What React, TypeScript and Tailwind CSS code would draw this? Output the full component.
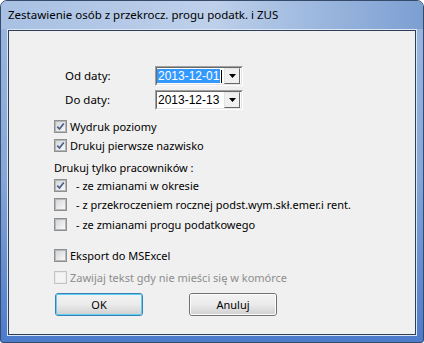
import React from 'react';

const ui = "font-['Noto_Sans',sans-serif] text-[11px] leading-none";

type BoxProps = { checked?: boolean; disabled?: boolean; label: string; gap?: string };

const CheckRow = ({ checked, disabled, label, gap = 'ml-[3px]' }: BoxProps) => {
  return (
    <div className="flex h-[20px] items-center">
      <div
        className={`flex h-[13px] w-[13px] items-center justify-center border ${
          disabled ? 'border-[#c4c4c4] bg-[#f4f4f4]' : 'border-[#8e8f8f] bg-[#f5f5f5]'
        }`}
      >
        <div
          className={`relative h-[11px] w-[11px] border ${
            disabled
              ? 'border-[#eaeaea] bg-[#f4f4f4]'
              : 'border-[#b4b7bb] bg-gradient-to-br from-[#d5d6d8] to-[#f9f9f9]'
          }`}
        >
          {checked && (
            <svg viewBox="0 0 9 9" className="absolute left-0 top-0 h-[9px] w-[9px]">
              <path d="M1.3 4.6 L3.5 7 L7.8 1.4" fill="none" stroke="#4b5d8f" strokeWidth="1.7" />
            </svg>
          )}
        </div>
      </div>
      <span className={`${gap} whitespace-nowrap ${disabled ? 'text-[#8d8d8d]' : 'text-black'}`}>{label}</span>
    </div>
  );
};

const DateField = ({ value, selected }: { value: string; selected?: boolean }) => {
  return (
    <div className="h-[20px] w-[88px] border border-t-[#a0a0a0] border-l-[#a0a0a0] border-b-white border-r-white">
      <div className="flex h-full w-full items-center border border-t-[#696969] border-l-[#696969] border-b-[#e3e3e3] border-r-[#e3e3e3] bg-white">
        <div className="flex min-w-0 flex-1 items-center overflow-hidden whitespace-nowrap font-['Liberation_Sans',sans-serif] text-[12px]">
          <span className={selected ? 'bg-[#3399ff] px-[1px] py-[1px] text-white' : 'px-[1px] text-black'}>{value}</span>
          {selected && <span className="ml-[1px] h-[13px] w-[1px] shrink-0 bg-black" />}
        </div>
        <div className="mr-[1px] flex h-[16px] w-[16px] shrink-0 items-center justify-center border border-t-[#e3e3e3] border-l-[#e3e3e3] border-b-[#696969] border-r-[#696969] bg-[#f0f0f0]">
          <svg viewBox="0 0 7 4" className="h-[4px] w-[7px]">
            <path d="M0 0 H7 L3.5 4 Z" fill="#000" />
          </svg>
        </div>
      </div>
    </div>
  );
};

const WinButton = ({ label, isDefault }: { label: string; isDefault?: boolean }) => {
  return (
    <div
      className={`flex h-[23px] w-[88px] rounded-[3px] border ${
        isDefault ? 'border-[#3c7fb1]' : 'border-[#707070]'
      }`}
    >
      <div
        className={`flex flex-1 items-center justify-center rounded-[2px] border bg-gradient-to-b from-[#f2f2f2] via-[#ebebeb] to-[#d2d2d2] ${
          isDefault ? 'border-[#5fd0f5]' : 'border-[#fcfcfc]'
        }`}
      >
        <span className="text-black">{label}</span>
      </div>
    </div>
  );
};

export default function App() {
  return (
    <div className={`${ui} h-[343px] w-[424px] bg-white`}>
      <div className="flex h-[343px] w-[424px] flex-col rounded-t-[7px] rounded-b-[3px] border border-[#364a69] bg-gradient-to-b from-[#9cb8e1] via-[#86a7d9] to-[#4c7bcb]">
        <div className="flex h-[28px] items-center bg-gradient-to-r from-[#a8c0e3] via-[#bed0ea] to-[#7c9fd2] pl-[7px] rounded-t-[6px] text-[11.5px]">
          <span className="text-black">Zestawienie osób z przekrocz. progu podatk. i ZUS</span>
        </div>
        <div className="mx-[6px] mb-[6px] flex-1 border border-[#dce6f4]">
          <div className="h-full border border-[#2d3e56] bg-[#f0f0f0]">
            <div className="flex flex-col pl-[45px] pt-[35px]">
              <div className="flex flex-col gap-[4px]">
                <div className="flex h-[20px] items-center">
                  <span className="ml-[11px] w-[90px] text-[11.5px]">Od daty:</span>
                  <DateField value="2013-12-01" selected />
                </div>
                <div className="flex h-[20px] items-center">
                  <span className="ml-[11px] w-[90px] text-[11.5px]">Do daty:</span>
                  <DateField value="2013-12-13" />
                </div>
              </div>
              <div className="mt-[6px]">
                <CheckRow checked label="Wydruk poziomy" />
              </div>
              <div className="-mt-[1px]">
                <CheckRow checked label="Drukuj pierwsze nazwisko" />
              </div>
              <div className="mt-[2px] flex h-[20px] items-center">
                <span>Drukuj tylko pracowników :</span>
              </div>
              <div className="-mt-[2px]">
                <CheckRow checked gap="ml-[9px]" label="- ze zmianami w okresie" />
              </div>
              <div className="-mt-[1px]">
                <CheckRow gap="ml-[9px]" label="- z przekroczeniem rocznej podst.wym.skł.emer.i rent." />
              </div>
              <CheckRow gap="ml-[9px]" label="- ze zmianami progu podatkowego" />
              <div className="mt-[11px]">
                <CheckRow label="Eksport do MSExcel" />
              </div>
              <div className="mt-[2px]">
                <CheckRow disabled label="Zawijaj tekst gdy nie mieści się w komórce" />
              </div>
              <div className="ml-[1px] mt-[6px] flex gap-[46px]">
                <WinButton isDefault label="OK" />
                <WinButton label="Anuluj" />
              </div>
            </div>
          </div>
        </div>
      </div>
    </div>
  );
}
